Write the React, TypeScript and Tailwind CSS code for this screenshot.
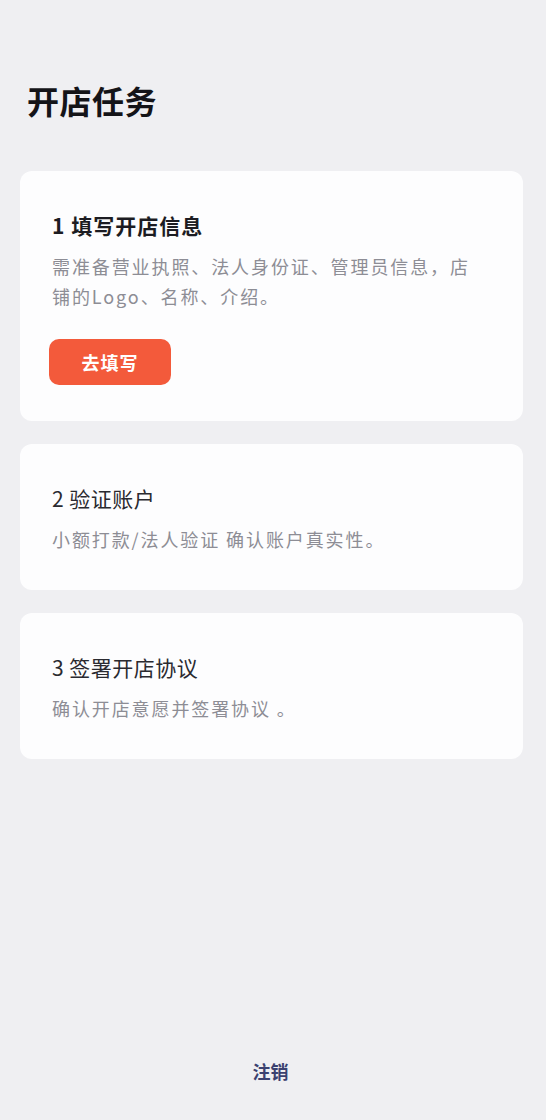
import React from "react";

const font = { fontFamily: '"Noto Sans CJK SC", "Noto Sans", sans-serif' };

function Card({ title, desc, bold, children }: { title: string; desc: React.ReactNode; bold?: boolean; children?: React.ReactNode }) {
  return (
    <div className="rounded-[12px] bg-[#fdfdfe] pl-8 pr-6 pt-[40px] pb-9">
      <div className={`text-[21px] leading-[28px] ${bold ? "font-semibold tracking-[1px] text-[#1c1c22]" : "font-normal tracking-[0.5px] text-[#2a2a30]"}`}>{title}</div>
      <div className="mt-3 text-[18px] leading-[30px] tracking-[1.9px] text-[#8d8d95]">{desc}</div>
      {children}
    </div>
  );
}

export default function App() {
  return (
    <div style={font} className="flex min-h-[1120px] flex-col bg-[#efeff2] pl-5 pr-[23px]">
      <h1 className="mt-[80px] pl-[7px] text-[32px] font-semibold leading-[40px] tracking-[0.5px] text-[#141418]">开店任务</h1>
      <div className="mt-[51px] flex flex-col gap-[23px]">
        <Card bold title="1 填写开店信息" desc={<>需准备营业执照、法人身份证、管理员信息，店<br />铺的Logo、名称、介绍。</>}>
          <button className="mt-[28px] -ml-[3px] flex h-[46px] w-[122px] items-center justify-center rounded-[10px] bg-[#f35a3b] text-[18px] font-bold tracking-[1px] text-white">去填写</button>
        </Card>
        <Card title="2 验证账户" desc="小额打款/法人验证 确认账户真实性。" />
        <Card title="3 签署开店协议" desc="确认开店意愿并签署协议 。" />
      </div>
      <div className="mt-auto pb-[35px] pr-[2px] text-center text-[18px] font-semibold leading-[28px] text-[#3b4170]">注销</div>
    </div>
  );
}
